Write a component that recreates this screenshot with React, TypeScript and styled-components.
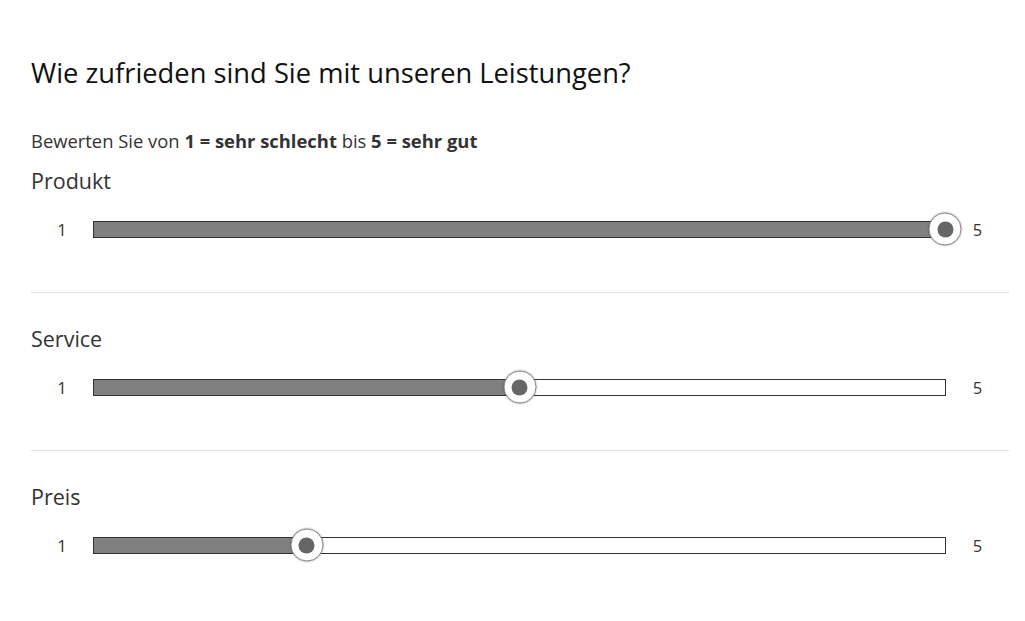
import styled, { createGlobalStyle } from "styled-components";

const GlobalStyle = createGlobalStyle`
  body {
    margin: 0;
    background: #fff;
    font-family: "Open Sans", "Liberation Sans", sans-serif;
  }
`;

const ratings = [
  { label: "Produkt", value: 5 },
  { label: "Service", value: 3 },
  { label: "Preis", value: 2 },
];

const MIN = 1;
const MAX = 5;

function Slider({ value }: { value: number }) {
  const pct = ((value - MIN) / (MAX - MIN)) * 100;
  return (
    <SliderRow>
      <EndLabel>{MIN}</EndLabel>
      <Track>
        <Fill style={{ width: `${pct}%` }} />
        <Thumb style={{ left: `${pct}%` }}>
          <Dot />
        </Thumb>
      </Track>
      <EndLabel>{MAX}</EndLabel>
    </SliderRow>
  );
}

export default function App() {
  return (
    <Page>
      <GlobalStyle />
      <Title>Wie zufrieden sind Sie mit unseren Leistungen?</Title>
      <Hint>
        Bewerten Sie von <b>1 = sehr schlecht</b> bis <b>5 = sehr gut</b>
      </Hint>
      {ratings.map((r, i) => (
        <Section key={r.label} $last={i === ratings.length - 1} $first={i === 0}>
          <ItemLabel>{r.label}</ItemLabel>
          <Slider value={r.value} />
        </Section>
      ))}
    </Page>
  );
}

const Page = styled.div`
  padding: 55px 16px 0 31px;
`;

const Title = styled.h1`
  margin: 0;
  font-size: 27.3px;
  font-weight: 400;
  line-height: 36px;
  color: #111;
`;

const Hint = styled.p`
  margin: 38px 0 0;
  font-size: 18.4px;
  line-height: 24px;
  color: #333;

  b {
    font-weight: 700;
  }
`;

const Section = styled.div<{ $last: boolean; $first: boolean }>`
  padding: ${(p) => (p.$first ? "14px" : "32px")} 0 45px;
  border-bottom: ${(p) => (p.$last ? "none" : "1px solid #e2e2e2")};
`;

const ItemLabel = styled.div`
  font-size: 21.5px;
  line-height: 28px;
  color: #333;
`;

const SliderRow = styled.div`
  margin-top: 17px;
  margin-bottom: 1px;
  display: grid;
  grid-template-columns: 62px 1fr 63px;
  align-items: center;
  height: 34px;
`;

const EndLabel = styled.div`
  text-align: center;
  font-size: 16.5px;
  color: #333;
`;

const Track = styled.div`
  position: relative;
  height: 17px;
  box-sizing: border-box;
  border: 1px solid #333;
  background: #fff;
`;

const Fill = styled.div`
  height: 100%;
  background: #808080;
`;

const Thumb = styled.div`
  position: absolute;
  top: 50%;
  width: 33px;
  height: 33px;
  box-sizing: border-box;
  border-radius: 50%;
  background: #fff;
  border: 1px solid #8a8a8a;
  box-shadow: 0 0 2px rgba(0, 0, 0, 0.35);
  transform: translate(-50%, -50%);
  display: flex;
  align-items: center;
  justify-content: center;
`;

const Dot = styled.div`
  width: 16px;
  height: 16px;
  border-radius: 50%;
  background: #666;
`;
